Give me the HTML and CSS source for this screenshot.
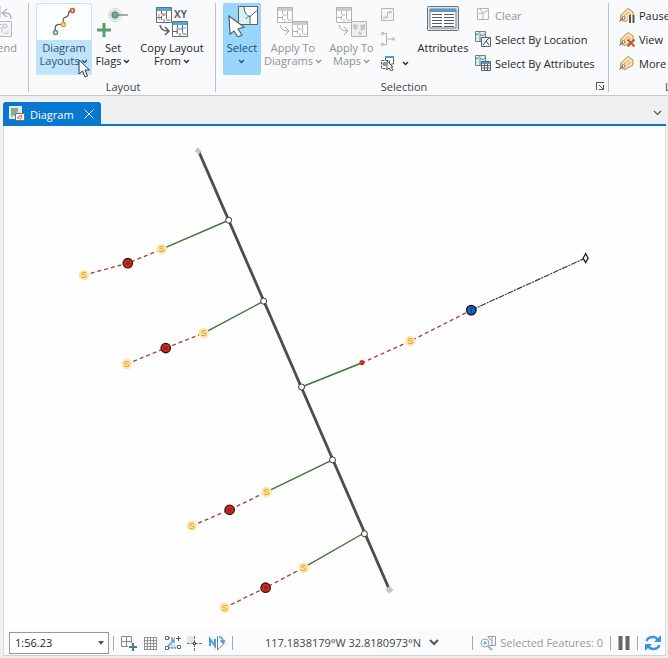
FILE: index.html
```html
<!DOCTYPE html>
<html lang="en">
<head>
<meta charset="utf-8">
<title>Diagram</title>
<link rel="stylesheet" href="styles.css">
</head>
<body>
<svg class="sprite" aria-hidden="true">
  <symbol id="chev" viewBox="0 0 7 5"><path d="M1 1l2.500 2.500L6 1" fill="none" stroke="currentColor" stroke-width="1.300"/></symbol>
  <symbol id="grid" viewBox="0 0 16 16">
    <path d="M.5.500h15v15H.5z" fill="#fff" stroke="currentColor"/>
    <path class="accent" d="M1 1h14v3H1z"/>
    <path d="M5.500 4v3M10.500 4v4h-5v5M1 10.500h4M10.500 8v5H15M8 15v-3" fill="none" stroke="currentColor" stroke-dasharray="4 1"/>
  </symbol>
  <symbol id="patch" viewBox="0 0 16 16"><path d="M.5.500h10v10H.500z" fill="#d9f0f3" stroke="#718087"/><path d="M1 3.500c3 0 4-1 4-3M5 3l3 2 2.500-3M5 4v6" fill="none" stroke="#718087"/></symbol>
  <symbol id="tag" viewBox="0 0 16 16"><path d="M2 8l7-6.500 5 3.500v5l-8 4.500L1.500 13z" fill="#fbe3b5" stroke="#b78a4d"/><path d="M5 9l5-4M8 10l4-3" stroke="#d0a565"/><circle cx="4.500" cy="11" r="1.500" fill="#fff" stroke="#766a60"/><path d="M4 11l-3.500 3.500" stroke="#766a60"/></symbol>
  <symbol id="s" viewBox="0 0 12 12"><circle cx="6" cy="6" r="5.200" fill="#ffe5a3"/><text x="6" y="9.300" text-anchor="middle" class="node-letter">S</text></symbol>
  <symbol id="device" viewBox="0 0 12 12"><circle cx="6" cy="6" r="4.700" fill="#db2415" stroke="#211c20" stroke-width="1.300"/><path d="M4.200 4.200h3.600v3.600H4.200z" fill="#892b20"/></symbol>
  <symbol id="junction" viewBox="0 0 8 8"><circle cx="4" cy="4" r="3" fill="#fff" stroke="#333"/></symbol>
</svg>

<div class="app">
  <header class="ribbon">
    <section class="group group-cut">
      <div class="tools">
        <button class="big muted" disabled>
          <svg class="pic" viewBox="0 0 32 32"><path d="M27 4l-5 4 5 4M22 8h4q5 0 5 6" fill="none" stroke="#b5b8ba" stroke-width="1.500"/><path d="M20 1v12" stroke="#b5b8ba"/><path d="M14 16.500h17.500v15H14" fill="#f4f5f6" stroke="#b5b8ba"/><circle cx="25" cy="21" r="2" fill="none" stroke="#b5b8ba"/><path d="M18 19.500h4M18 23h4v5M24 28.500h4v-3" fill="none" stroke="#c5c8ca"/></svg>
          <span>end</span>
        </button>
      </div>
    </section>
    <section class="group group-layout">
      <div class="tools">
        <button class="big hot">
          <svg class="pic" viewBox="0 0 32 32"><path d="M7.500 25c-1-5 1-6 6-5.500M15.500 17c-2-7 5-3 5-8q0-3 3-3.500" fill="none" stroke="#5b6268" stroke-width="1.300"/><circle cx="7.500" cy="27.500" r="2" fill="#d9f0dd" stroke="#4d9665" stroke-width="1.400"/><circle cx="15.500" cy="19.500" r="2" fill="#ffe4aa" stroke="#e3a02c" stroke-width="1.400"/><circle cx="24.500" cy="5.500" r="2" fill="#f5c3a8" stroke="#ca5532" stroke-width="1.400"/></svg>
          <span>Diagram<br>Layouts<svg class="chev"><use href="#chev"/></svg></span>
          <svg class="cursor" viewBox="0 0 12 19"><path d="M1 1v14l3.500-3 2.500 6 2.500-1L7 11h4.500z" fill="#fff" stroke="#25364a"/></svg>
        </button>
        <button class="big set-flags">
          <svg class="pic" viewBox="0 0 32 32"><circle cx="18" cy="10" r="6.500" fill="none" stroke="#d0d4d4"/><circle cx="18" cy="10" r="4.500" fill="#e5ebe7" stroke="#b8bfba"/><path d="M20 10h11" stroke="#59615d"/><circle cx="18" cy="10" r="3" fill="#72a982" stroke="#527d5e"/><path d="M7 18v14M0 25h14" stroke="#5c9d6d" stroke-width="3"/></svg>
          <span>Set<br>Flags<svg class="chev"><use href="#chev"/></svg></span>
        </button>
        <button class="big copy">
          <svg class="pic" viewBox="0 0 32 32"><g color="#656c73"><use href="#grid" class="blue" width="16" height="16" y="2"/><use href="#grid" class="blue" x="16" y="16" width="16" height="16"/></g><path d="M3 9v6M6 9h5" stroke="#d67b52"/><path d="M21 23v6M25 23h5" stroke="#4fa2dc"/><path d="M4 20q1 6 8 6M9 22l4 4-4 4" fill="none" stroke="#5b6268" stroke-width="1.500"/><text x="18" y="13" class="xy">XY</text></svg>
          <span>Copy Layout<br>From<svg class="chev"><use href="#chev"/></svg></span>
        </button>
      </div>
      <h2>Layout</h2>
    </section>
    <section class="group group-selection">
      <div class="tools">
        <button class="big active">
          <svg class="pic" viewBox="0 0 32 32"><path d="M12.500 1.500h19v18h-19z" fill="#fff" stroke="#59636a"/><path d="M13 2h6c0 6 1 8 5 10v7H13z" fill="#d9f4f5"/><path d="M18 1.500c0 5 2 9 6 10l7-6M24 11v8.500M24 11c-2 0-3 1-4 3" fill="none" stroke="#59636a"/><path d="M3 11l1 18 4-3 4 6 4-2-4-6 6-2z" fill="#fff" stroke="#53616b" stroke-width="1.200"/></svg>
          <span>Select<br><svg class="chev"><use href="#chev"/></svg></span>
        </button>
        <button class="big diagrams muted" disabled>
          <svg class="pic" viewBox="0 0 32 32"><g color="#b0b3b5"><use href="#grid" class="gray" y="2" width="16" height="16"/><use href="#grid" class="gray" x="15" y="16" width="16" height="16"/></g><path d="M3 20q1 6 8 6M8 22l4 4-4 4" fill="none" stroke="#aaa"/></svg>
          <span>Apply To<br>Diagrams<svg class="chev"><use href="#chev"/></svg></span>
        </button>
        <button class="big maps muted" disabled>
          <svg class="pic" viewBox="0 0 32 32"><g color="#b0b3b5"><use href="#grid" class="gray" y="2" width="16" height="16"/></g><path d="M15.500 16.500h15v15h-15z" fill="#eee" stroke="#b0b3b5"/><path d="M17 19l5 1-1 4-2 1-2-3zM24 20l5-1v5l-4 2zM22 26l4 2-2 3z" fill="#c5c5c5"/><path d="M3 20q1 6 8 6M8 22l4 4-4 4" fill="none" stroke="#aaa"/></svg>
          <span>Apply To<br>Maps<svg class="chev"><use href="#chev"/></svg></span>
        </button>
        <div class="stack stack-icons">
          <button class="small muted" disabled aria-label="Select path"><svg viewBox="0 0 16 16"><path d="M1.500 1.500h12v12h-12z" fill="#f6f6f6" stroke="#b5b5b5"/><path d="M5 10.500h2.500v-5H10" fill="none" stroke="#b5b5b5"/><circle cx="4.500" cy="10.500" r="1" fill="#fff" stroke="#b5b5b5"/><circle cx="10.500" cy="5" r="1" fill="#fff" stroke="#b5b5b5"/></svg></button>
          <button class="small muted" disabled aria-label="Select connected"><svg viewBox="0 0 16 16"><path d="M3 2.500h3.500v11H3M7 8h7" fill="none" stroke="#b5b5b5"/><path d="M1.500 1.500h2v2h-2zM1.500 12.500h2v2h-2zM12.500 7h2v2h-2z" fill="#fff" stroke="#b5b5b5"/></svg></button>
          <button class="small" aria-label="Selection tools"><svg viewBox="0 0 16 16"><path d="M5.500 5V1.500h8V9H11" fill="#fff" stroke="#59636a"/><path d="M5 1h9v2H5z" fill="#529acd"/><path d="M1.500 5.500h8v8h-8z" fill="#fff" stroke="#59636a" stroke-dasharray="3 1"/><circle cx="4.500" cy="9" r="1.500" fill="#72b7e1" stroke="#59636a"/><path d="M7 6v9l2-2 2 3 2-1-2-3h2z" fill="#fff" stroke="#555"/></svg><svg class="chev"><use href="#chev"/></svg></button>
        </div>
        <button class="big attributes">
          <svg class="pic" viewBox="0 0 32 32"><rect x=".5" y="1.500" width="31" height="24" rx="1" fill="#dfe3e5" stroke="#67737c"/><path d="M3 4h26v19H3z" fill="#fff" stroke="#768087"/><path d="M3 4h26v3H3z" fill="#4f9bd2"/><path d="M5 9.500h10M5 12.500h10M5 15.500h10M5 18.500h10M5 21.500h10M17 9.500h10M17 12.500h10M17 15.500h10M17 18.500h10M17 21.500h10" stroke="#555e66"/></svg>
          <span>Attributes</span>
        </button>
        <div class="stack stack-commands">
          <button class="small muted clear" disabled><svg viewBox="0 0 16 16"><path d="M2.500 1.500h11v11h-11zM5 2l3 4v6M8 6l5-3M4 7l4-1" fill="none" stroke="#b5b5b5"/></svg>Clear</button>
          <button class="small"><svg viewBox="0 0 16 16"><use href="#patch" width="16" height="16"/><path d="M6.500 6.500h9v9h-9z" fill="#e8f5f7" stroke="#59636a"/><path d="M8 14l3-4 3 4M11 10l3-3" fill="none" stroke="#3f4b53"/></svg>Select By Location</button>
          <button class="small"><svg viewBox="0 0 16 16"><use href="#patch" width="16" height="16"/><path d="M6.500 6.500h9v9h-9z" fill="#fff" stroke="#59636a"/><path d="M7 7h8v2H7z" fill="#529acd"/><path d="M9.500 9v6M12.500 9v6M7 10.500h8M7 13h8" stroke="#59636a"/></svg>Select By Attributes</button>
        </div>
      </div>
      <div class="caption"><h2>Selection</h2><button class="launcher" aria-label="Selection options"><svg viewBox="0 0 9 9"><path d="M.5 8V.500H8M3 3l4 4M7.500 3v4.500H3" fill="none" stroke="#555"/></svg></button></div>
    </section>
    <section class="group group-labels">
      <div class="tools">
        <div class="stack">
          <button class="small"><svg viewBox="0 0 16 16"><use href="#tag" width="16" height="16"/><path d="M9 8h7v8H9z" fill="#f8fafc"/><path d="M11 8v8M14.500 8v8" stroke="#555" stroke-width="2"/></svg>Pause</button>
          <button class="small"><svg viewBox="0 0 16 16"><use href="#tag" width="16" height="16"/><path d="M8.500 8.500l7 7M15.500 8.500l-7 7" stroke="#ce512e" stroke-width="2"/></svg>View</button>
          <button class="small"><svg viewBox="0 0 16 16"><use href="#tag" width="16" height="16"/></svg>More</button>
        </div>
      </div>
      <h2>L</h2>
    </section>
  </header>

  <main class="pane">
    <div class="tabs">
      <div class="tab">
        <svg viewBox="0 0 16 16"><path d="M.5.500h12v12H.500z" fill="#dce9dc" stroke="#e9eef0"/><path d="M2 2h7v4l-3 3-4 2z" fill="#8cab90"/><path d="M6.500 7.500h9v7h-9z" fill="#fff" stroke="#68747c"/><path d="M8 11.500h3M12.500 9v2" stroke="#d47043" stroke-width="1.500"/><circle cx="11" cy="11.500" r="1.500" fill="#fff" stroke="#d47043"/></svg>
        <span>Diagram</span>
        <button aria-label="Close tab"><svg viewBox="0 0 10 10"><path d="M.5.500l9 9M9.500.500l-9 9" stroke="#e3f1fc"/></svg></button>
      </div>
      <button class="tab-menu" aria-label="Open views"><svg viewBox="0 0 9 6"><path d="M1 1l3.500 3.500L8 1" fill="none" stroke="#555" stroke-width="1.200"/></svg></button>
    </div>

    <svg class="map" viewBox="4 126 662 504" role="img" aria-label="Network diagram">
      <g fill="none" stroke="#f6f7f9" stroke-dasharray="5 5"><path d="M8 134l48 55 44 87 18 42M218 165l50 65 50 87M340 137l120 15 206 28M420 175l150 72"/></g>
      <path d="M199 151L390 590" stroke="#4d4d4d" stroke-width="2.800"/>
      <g stroke="#397733" stroke-width="1.400"><path d="M162 249l67-29M204 333l60-32M302 387l60-24M267 492l66-32M304 568l61-35"/></g>
      <g stroke="#a04b33" stroke-width="1.400" stroke-dasharray="4 3" fill="none"><path d="M84 275l44-12 34-14M127 364l39-16 38-15M192 526l38-16 37-18M225 608l41-20 38-20M362 363l49-22 61-31"/></g>
      <path d="M472 310l114-52" stroke="#353640" stroke-width="1.200" stroke-dasharray="6 1 2 1"/>
      <path d="M198 147l4 4-3 3-4-3zM390 586l4 4-4 4-4-4z" fill="#c4c7c4"/>
      <g>
        <use href="#junction" x="225" y="216" width="8" height="8"/><use href="#junction" x="260" y="297" width="8" height="8"/><use href="#junction" x="298" y="383" width="8" height="8"/><use href="#junction" x="329" y="456" width="8" height="8"/><use href="#junction" x="361" y="530" width="8" height="8"/>
        <use href="#s" x="78" y="269" width="12" height="12"/><use href="#s" x="156" y="243" width="12" height="12"/><use href="#s" x="121" y="358" width="12" height="12"/><use href="#s" x="198" y="327" width="12" height="12"/><use href="#s" x="405" y="335" width="12" height="12"/><use href="#s" x="186" y="520" width="12" height="12"/><use href="#s" x="261" y="486" width="12" height="12"/><use href="#s" x="219" y="602" width="12" height="12"/><use href="#s" x="298" y="562" width="12" height="12"/>
        <use href="#device" x="122" y="257" width="12" height="12"/><use href="#device" x="160" y="342" width="12" height="12"/><use href="#device" x="224" y="504" width="12" height="12"/><use href="#device" x="260" y="582" width="12" height="12"/>
      </g>
      <circle cx="362.500" cy="362.500" r="2.600" fill="#d82a16"/>
      <circle cx="472" cy="310" r="4.700" fill="#176bd0" stroke="#14171d" stroke-width="1.500"/><text x="472" y="312.500" text-anchor="middle" class="t-letter">T</text>
      <path d="M586.500 253.500l2.500 4.500-2.500 4.500L584 258z" fill="#fff" stroke="#222" stroke-width="1.300"/>
    </svg>

    <footer class="status">
      <label class="scale"><select aria-label="Map scale"><option>1:56.23</option></select><svg viewBox="0 0 6 4"><path d="M0 0h6L3 4z" fill="#555"/></svg></label>
      <i class="rule"></i>
      <div class="status-tools">
        <button aria-label="Add constraint"><svg viewBox="0 0 16 16"><path d="M.5 1.500h10v10H.500zM5.500 1.500v10M.5 6.500h10" fill="none" stroke="#888"/><path d="M7 8h9v8H7z" fill="#fafbfd"/><path d="M12 8v8M8 12h8" stroke="#4b7898" stroke-width="2"/></svg></button>
        <button aria-label="Grid"><svg viewBox="0 0 16 16"><path d="M1.500 2v12M4.500 2v12M7.500 2v12M10.500 2v12M13.500 2v12M1 2.500h13M1 5.500h13M1 8.500h13M1 11.500h13M1 14.500h13" stroke="#929292"/></svg></button>
        <button aria-label="Snapping"><svg viewBox="0 0 16 16"><path d="M2 13l5-6 7 6z" fill="#c9e6f7"/><path d="M3 3h7M3 13h9" stroke="#555" stroke-dasharray="2 1"/><path d="M3 11l6-6M6 5h3v3" fill="none" stroke="#4c9dd0" stroke-width="1.300"/><path d="M.5 1.500h3v3h-3zM.5 11.500h3v3h-3zM12.500 10.500h3v3h-3z" fill="#fff" stroke="#666"/><path d="M13.500 1v5M11 3.500h5" stroke="#555"/></svg></button>
        <button aria-label="Inference"><svg viewBox="0 0 16 16"><path d="M0 1h8v7H0z" fill="#dcebdc"/><path d="M7.500 1v15M0 8.500h16" stroke="#777" stroke-dasharray="3 1"/><path d="M6.500 7.500h2v2h-2z" fill="#fff" stroke="#444"/></svg></button>
        <button aria-label="Ground to grid"><svg viewBox="0 0 16 16"><path d="M1 11V4l5 7V4" fill="none" stroke="#4a9dd6" stroke-width="2"/><path d="M8.500 1v14l7-7" fill="none" stroke="#6a7d88"/><path d="M10 2q4 0 4 5M11.500 5L14 8l2-3" fill="none" stroke="#4a9dd6" stroke-width="1.500"/></svg></button>
      </div>
      <i class="rule"></i>
      <button class="coords">117.1838179°W 32.8180973°N<svg viewBox="0 0 10 7"><path d="M1 1l4 4 4-4" fill="none" stroke="#555" stroke-width="2"/></svg></button>
      <div class="status-end">
        <i class="rule"></i>
        <span class="selected"><svg viewBox="0 0 16 16"><path d="M7.500 1.500h8v9h-6M8 2l4 4V2M12 6v4" fill="none" stroke="#999"/><circle cx="5" cy="8" r="4" fill="#fff" stroke="#87a7bc"/><path d="M5 6v4M3 8h4" stroke="#56a2d2"/><path d="M8 11l4 4" stroke="#aaa" stroke-width="2"/></svg>Selected Features: 0</span>
        <i class="rule"></i>
        <button aria-label="Pause drawing"><svg class="pause" viewBox="0 0 12 16"><path d="M2.500 1v14M9.500 1v14" stroke="#666" stroke-width="4"/></svg></button>
        <i class="rule"></i>
        <button aria-label="Refresh"><svg viewBox="0 0 16 16"><path d="M1.500 6Q3 2 8 2q3 0 5 3M14.500 10Q13 14 8 14q-3 0-5-3" fill="none" stroke="#3597dc" stroke-width="2.400"/><path d="M16 0v7H9zM0 16V9h7z" fill="#3597dc"/></svg></button>
      </div>
    </footer>
  </main>
</div>
</body>
</html>
```
FILE: styles.css
```css
* { box-sizing: border-box; }
body { margin: 0; background: #f0f0f0; color: #262626; font: 11px/13px "Open Sans", "Noto Sans", sans-serif; }
button { display: flex; align-items: center; margin: 0; padding: 0; border: 0; background: none; color: inherit; font: inherit; white-space: nowrap; }
svg { display: block; flex: none; }
h2 { margin: 0; font: inherit; color: #444; text-align: center; }
.sprite { position: absolute; width: 0; height: 0; }
.app { display: flex; flex-direction: column; height: 100vh; overflow: hidden; }

.ribbon { display: flex; flex: none; padding-top: 3px; background: #f8fafc; border-bottom: 1px solid #c5c8ca; overflow: hidden; }
.group { display: flex; flex: none; flex-direction: column; height: 92px; border: 0 solid; border-right-width: 1px; border-image: linear-gradient(#c0c3c5 88px, transparent 88px) 1; }
.tools { display: flex; height: 77px; }
.group-cut { width: 29px; }
.group-cut .tools { justify-content: flex-end; padding-right: 11px; }
.group-cut .big { align-items: flex-end; }
.group-cut .pic { margin-right: 5px; }
.group-layout { padding: 0 5px 0 7px; }
.group-selection { padding: 0 3px 0 7px; width: 393px; }
.group-labels { flex: 1; min-width: 0; border: 0; padding-left: 10px; overflow: hidden; }
.group-labels h2 { padding-left: 46px; text-align: left; }

.big { flex: none; flex-direction: column; height: 72px; padding-top: 2px; gap: 4px; position: relative; }
.big span { display: block; text-align: center; }
.pic { width: 32px; height: 32px; }
.chev { display: inline-block; width: 7px; height: 5px; margin-left: 2px; vertical-align: 1px; }
.muted { color: #929292; }
.hot { width: 56px; border: 1px solid #c7e4f6; border-radius: 2px; padding-top: 1px; background: linear-gradient(#fcfdfe 36px, #bfe3fa 36px); color: #2c5475; }
.set-flags { width: 42px; }
.copy { width: 76px; }
.active { width: 38px; border-radius: 2px; background: #98d6fb; color: #244d70; }
.active .chev { margin-left: 0; }
.diagrams { width: 64px; }
.maps { width: 53px; }
.attributes { width: 58px; }
.cursor { position: absolute; left: 41px; top: 55px; width: 12px; height: 19px; }
.blue { fill: #57a5dd; }
.gray { fill: #ccc; }
.xy { font: bold 10px "Open Sans", sans-serif; fill: #5d6368; }

.stack { display: flex; flex-direction: column; width: 130px; }
.stack-icons { width: 36px; padding-left: 2px; }
.stack-commands { padding-left: 3px; }
.small { height: 24px; gap: 4px; }
.small svg:not(.chev) { width: 16px; height: 16px; }
.caption { display: grid; grid-template-columns: 1fr 20px; align-items: center; }
.launcher { justify-content: flex-end; }
.launcher svg { width: 9px; height: 9px; }

.pane { display: flex; flex: 1; min-height: 0; flex-direction: column; margin: 0 2px 2px 3px; border-bottom: 1px solid #d0d0d0; }
.tabs { display: flex; flex: none; align-items: flex-end; justify-content: space-between; height: 30px; padding-top: 6px; border-bottom: 2px solid #0878d1; }
.tab { display: flex; align-items: center; height: 22px; width: 98px; padding: 2px 7px 0 6px; border-radius: 3px 3px 0 0; background: #0878d1; color: #fff; }
.tab > svg { width: 16px; height: 16px; margin-right: 5px; }
.tab button { margin-left: auto; }
.tab button svg { width: 10px; height: 10px; }
.tab-menu { height: 22px; padding-right: 4px; }
.tab-menu svg { width: 9px; height: 6px; }

.map { flex: 1; min-height: 0; width: 100%; background: #fefefe; border: 1px solid #dedede; border-width: 0 1px; }
.node-letter { font: 9px "Liberation Sans", sans-serif; fill: #d99a22; }
.t-letter { font: bold 7px "Liberation Sans", sans-serif; fill: #102d59; }

.status { display: flex; flex: none; align-items: center; height: 25px; padding: 0 4px 0 5px; background: #fafbfd; border: 1px solid #dedede; border-width: 0 1px; }
.scale { display: flex; align-items: center; position: relative; width: 100px; }
.scale select { width: 100%; height: 22px; padding: 0 5px; border: 1px solid #999; border-radius: 0; background: #fff; color: #262626; font: inherit; appearance: none; }
.scale svg { position: absolute; right: 5px; width: 6px; height: 4px; }
.rule { flex: none; width: 1px; height: 14px; background: #a8a8a8; }
.scale + .rule { margin-left: 4px; }
.status-tools { display: flex; gap: 6px; margin: 0 7px; }
.status-tools svg { width: 16px; height: 16px; }
.coords { gap: 8px; margin-left: 32px; color: #444; }
.coords > svg { width: 10px; height: 7px; }
.status-end { display: flex; align-items: center; gap: 7px; margin-left: auto; color: #999; }
.selected { display: flex; align-items: center; gap: 4px; white-space: nowrap; }
.status-end svg { height: 16px; width: 16px; }
.status-end .pause { width: 12px; }
```
